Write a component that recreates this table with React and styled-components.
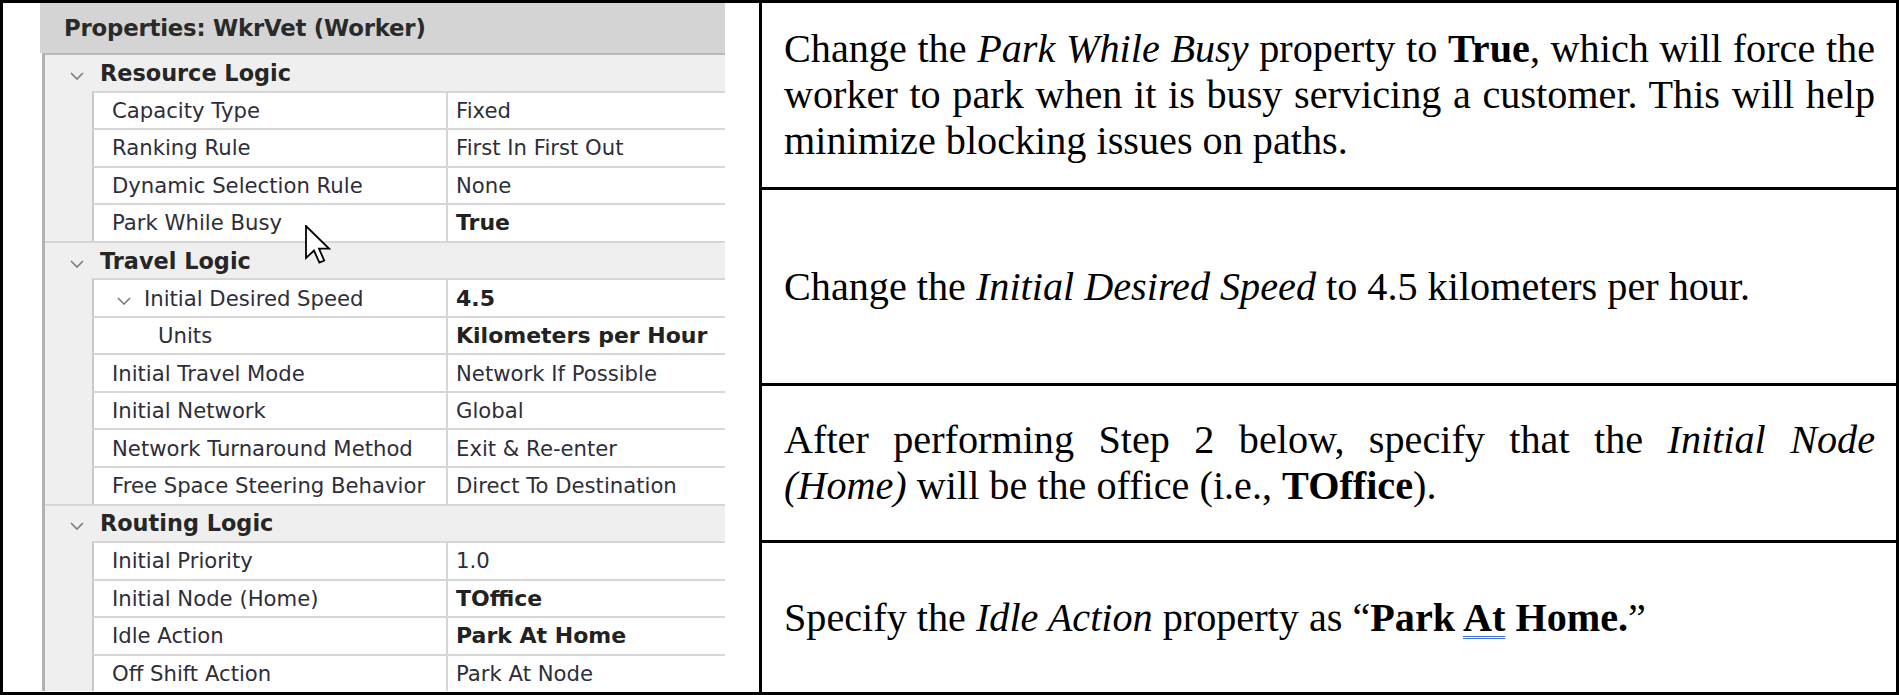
import React from "react";
import styled, { createGlobalStyle } from "styled-components";

const GlobalStyle = createGlobalStyle`
  html, body {
    margin: 0;
    padding: 0;
    background: #fff;
  }
  body {
    font-family: "Liberation Serif", "Times New Roman", serif;
  }
`;

const Frame = styled.div`
  box-sizing: border-box;
  width: 1899px;
  height: 695px;
  border: 3px solid #000;
  display: grid;
  grid-template-columns: 759px 1fr;
  overflow: hidden;
`;

const ShotCell = styled.div`
  border-right: 3px solid #000;
  padding-left: 37px;
  overflow: hidden;
`;

const Panel = styled.div`
  position: relative;
  width: 685px;
  font-family: "DejaVu Sans", Tahoma, sans-serif;
  font-size: 21.2px;
  color: #2e2e3a;
`;

const PanelTitle = styled.div`
  box-sizing: border-box;
  height: 50px;
  padding-left: 24px;
  display: flex;
  align-items: center;
  background: #d4d4d4;
  font-weight: bold;
  font-size: 22.8px;
  letter-spacing: -0.2px;
  color: #2a2a2a;
`;

const Grid = styled.div`
  margin-left: 2px;
  border-left: 3px solid #b2b2b2;
  background: #efefef;
`;

const CategoryRow = styled.div`
  box-sizing: border-box;
  height: 37.55px;
  display: flex;
  align-items: center;
  padding-left: 25px;
  border-top: 2px solid ${(p) => (p.$first ? "#b9b9b9" : "#d6d6d6")};
  font-weight: bold;
  font-size: 22.4px;
  color: #262626;
`;

const Chevron = styled.svg`
  flex: none;
  margin-top: 6px;
  margin-right: ${(p) => p.$gap}px;
`;

const PropRow = styled.div`
  box-sizing: border-box;
  height: 37.55px;
  margin-left: 47px;
  display: grid;
  grid-template-columns: 352px 1fr;
  background: #fff;
  border-top: 2px solid #d6d6d6;
  border-left: 2px solid #c9c9c9;
`;

const NameCell = styled.div`
  display: flex;
  align-items: center;
  padding-left: ${(p) => p.$indent}px;
  white-space: nowrap;
  overflow: hidden;
`;

const ValueCell = styled.div`
  display: flex;
  align-items: center;
  padding-left: 8px;
  border-left: 2px solid #d6d6d6;
  white-space: nowrap;
  overflow: hidden;
  font-weight: ${(p) => (p.$bold ? "bold" : "normal")};
  font-size: ${(p) => (p.$bold ? "22px" : "21.2px")};
  color: ${(p) => (p.$bold ? "#222" : "#2e2e3a")};
`;

const Cursor = styled.svg`
  position: absolute;
  left: 265px;
  top: 222px;
`;

const Steps = styled.div`
  display: grid;
  grid-template-rows: 184px 196px 157px 1fr;
`;

const Step = styled.div`
  display: flex;
  align-items: center;
  padding: 0 21px 0 22px;
  border-top: ${(p) => (p.$first ? "none" : "3px solid #000")};
`;

const StepText = styled.p`
  margin: 0;
  width: 100%;
  font-size: 40.2px;
  line-height: 46px;
  text-align: justify;
  color: #000;
`;

/* first line of a paragraph that Word wrapped early; stretched to the full width */
const FullLine = styled.span`
  display: block;
  text-align: justify;
  text-align-last: justify;
`;

const Marked = styled.span`
  text-decoration-line: underline;
  text-decoration-style: double;
  text-decoration-color: #3d6fd6;
  text-decoration-thickness: 1px;
  text-underline-offset: 5px;
`;

const sections = [
  {
    title: "Resource Logic",
    rows: [
      { name: "Capacity Type", value: "Fixed" },
      { name: "Ranking Rule", value: "First In First Out" },
      { name: "Dynamic Selection Rule", value: "None" },
      { name: "Park While Busy", value: "True", bold: true },
    ],
  },
  {
    title: "Travel Logic",
    rows: [
      { name: "Initial Desired Speed", value: "4.5", bold: true, level: 1 },
      { name: "Units", value: "Kilometers per Hour", bold: true, level: 2 },
      { name: "Initial Travel Mode", value: "Network If Possible" },
      { name: "Initial Network", value: "Global" },
      { name: "Network Turnaround Method", value: "Exit & Re-enter" },
      { name: "Free Space Steering Behavior", value: "Direct To Destination" },
    ],
  },
  {
    title: "Routing Logic",
    rows: [
      { name: "Initial Priority", value: "1.0" },
      { name: "Initial Node (Home)", value: "TOffice", bold: true },
      { name: "Idle Action", value: "Park At Home", bold: true },
      { name: "Off Shift Action", value: "Park At Node" },
    ],
  },
];

function Chev({ gap }) {
  return (
    <Chevron $gap={gap} width="14" height="8" viewBox="0 0 14 8">
      <polyline points="1,1 7,7 13,1" fill="none" stroke="#7b7b7b" strokeWidth="1.6" />
    </Chevron>
  );
}

function PropertyRow({ row }) {
  const level = row.level || 0;
  const indent = level === 1 ? 23 : level === 2 ? 64 : 18;
  return (
    <PropRow>
      <NameCell $indent={indent}>
        {level === 1 && <Chev gap={13} />}
        {row.name}
      </NameCell>
      <ValueCell $bold={row.bold}>{row.value}</ValueCell>
    </PropRow>
  );
}

export default function App() {
  return (
    <>
      <GlobalStyle />
      <Frame>
        <ShotCell>
          <Panel>
            <PanelTitle>Properties: WkrVet (Worker)</PanelTitle>
            <Grid>
              {sections.map((s, i) => (
                <React.Fragment key={s.title}>
                  <CategoryRow $first={i === 0}>
                    <Chev gap={16} />
                    {s.title}
                  </CategoryRow>
                  {s.rows.map((r) => (
                    <PropertyRow key={r.name} row={r} />
                  ))}
                </React.Fragment>
              ))}
            </Grid>
            <Cursor width="26" height="40" viewBox="0 0 13 20">
              <path
                d="M0.5 0.5 L0.5 16.5 L4.5 12.8 L7.2 18.8 L9.6 17.8 L7 11.8 L12 11.8 Z"
                fill="#fff"
                stroke="#000"
                strokeWidth="0.9"
                strokeLinejoin="miter"
              />
            </Cursor>
          </Panel>
        </ShotCell>
        <Steps>
          <Step $first>
            <StepText>
              Change the <i>Park While Busy</i> property to <b>True</b>, which will force the
              worker to park when it is busy servicing a customer. This will help minimize
              blocking issues on paths.
            </StepText>
          </Step>
          <Step>
            <StepText>
              Change the <i>Initial Desired Speed</i> to 4.5 kilometers per hour.
            </StepText>
          </Step>
          <Step>
            <StepText>
              <FullLine>
                After performing Step 2 below, specify that the <i>Initial Node</i>
              </FullLine>
              <i>(Home)</i> will be the office (i.e., <b>TOffice</b>).
            </StepText>
          </Step>
          <Step>
            <StepText>
              Specify the <i>Idle Action</i> property as “<b>Park <Marked>At</Marked> Home.</b>”
            </StepText>
          </Step>
        </Steps>
      </Frame>
    </>
  );
}
